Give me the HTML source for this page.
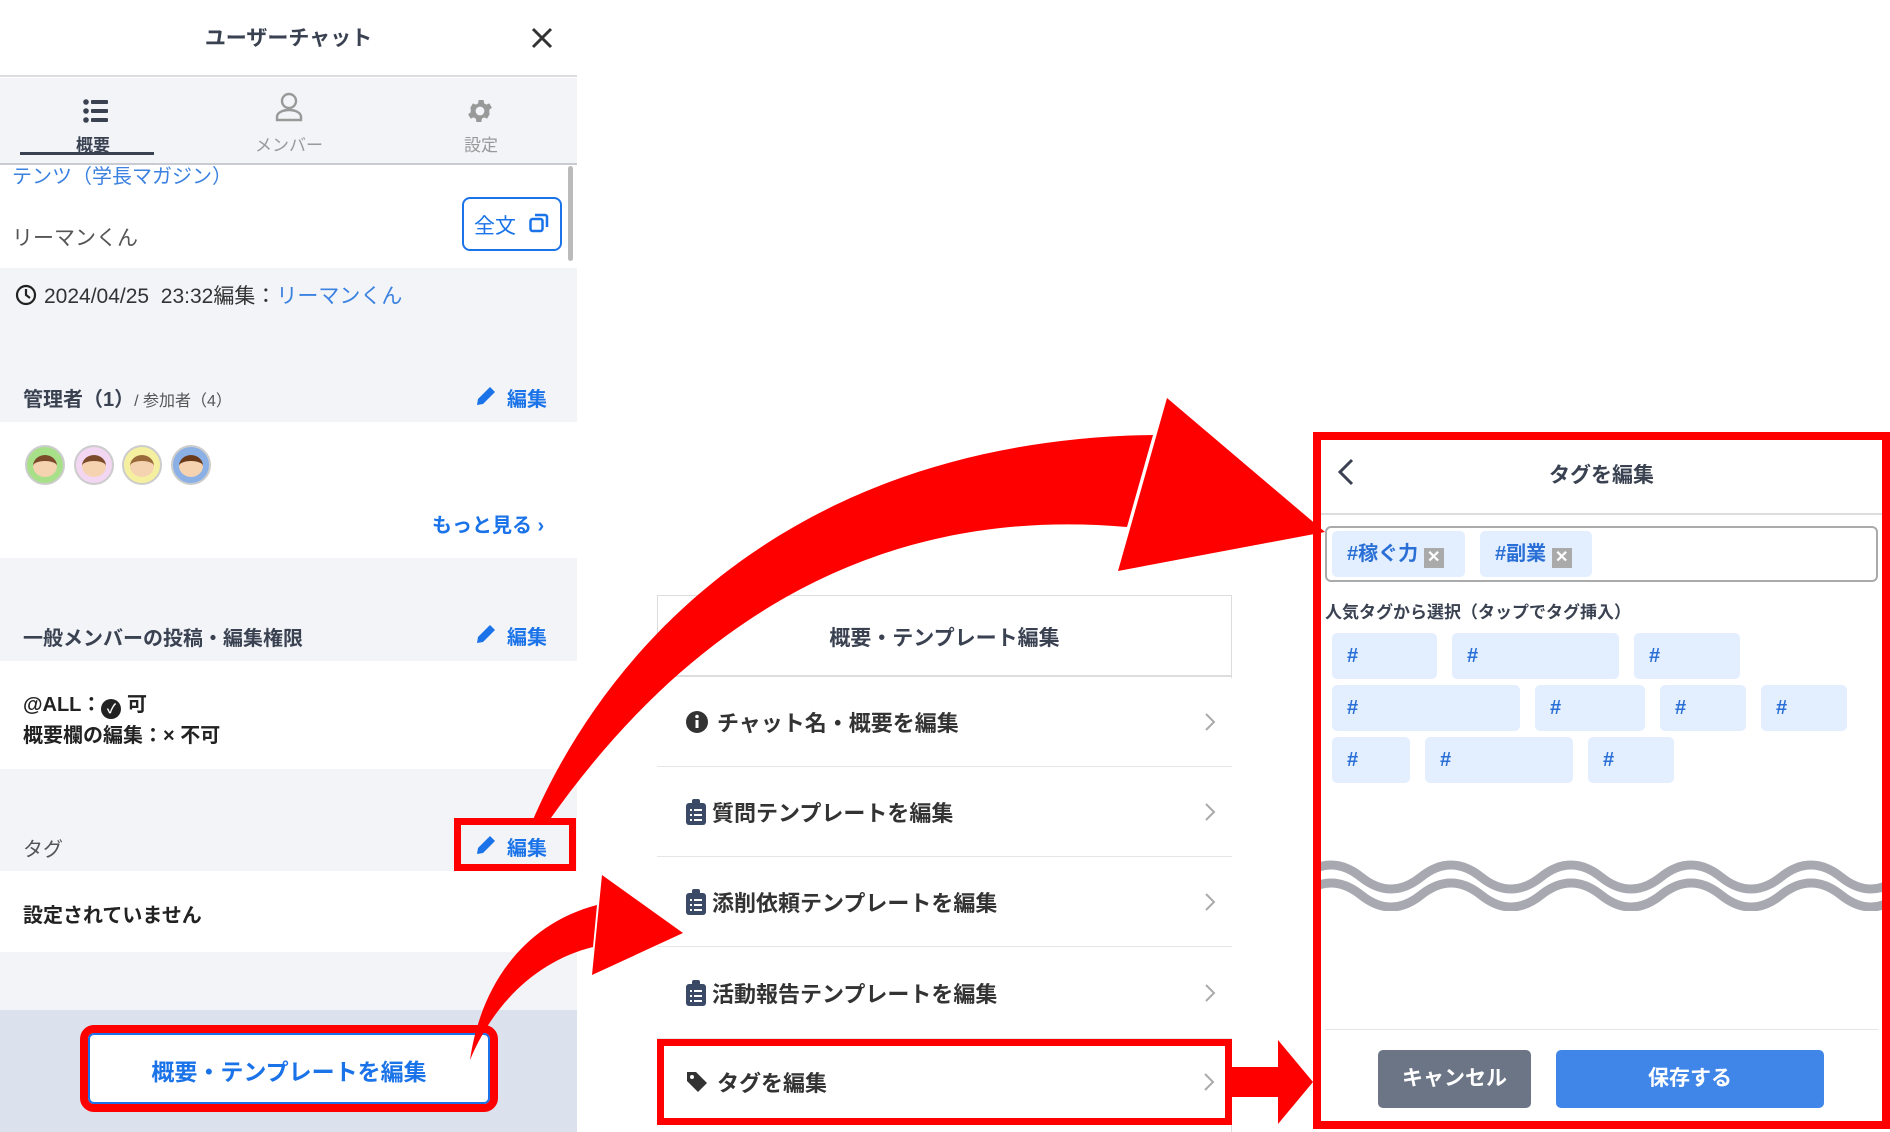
<!DOCTYPE html>
<html><head><meta charset="utf-8"><style>
*{margin:0;padding:0;box-sizing:border-box}
body{width:1890px;height:1132px;position:relative;overflow:hidden;background:#fff;font-family:"Liberation Sans","Noto Sans CJK JP",sans-serif;color:#333}
.a{position:absolute;white-space:nowrap}
.g{background:#f2f4f8}
.blue{color:#1a73e8}
.dk{color:#3a4252}
.row{position:absolute;left:657px;width:575px;border-bottom:1px solid #e6e6e6;background:#fff}
.row .t{position:absolute;left:60px;top:50%;transform:translateY(-50%);font-size:22px;font-weight:bold;color:#333}
.row .ic{position:absolute;left:29px;top:50%;transform:translateY(-50%)}
.row .ch{position:absolute;right:16px;top:50%;transform:translateY(-50%)}
.chip{position:absolute;background:#e3efff;border-radius:5px;height:46px;color:#2a6fd6;font-weight:bold;font-size:20px;line-height:46px;padding-left:15px}
</style></head><body>

<!-- LEFT PANEL -->
<div class="a" style="left:0;top:0;width:577px;height:77px;border-bottom:2px solid #ddd;background:#fff"></div>
<div class="a dk" style="left:0;width:577px;top:22px;text-align:center;font-size:21px;font-weight:bold">ユーザーチャット</div>
<svg class="a" style="left:531px;top:27px" width="22" height="22"><path d="M2 2L20 20M20 2L2 20" stroke="#333" stroke-width="3"/></svg>
<div class="a g" style="left:0;top:78px;width:577px;height:87px;border-bottom:2px solid #c8ccd2"></div>
<svg class="a" style="left:83px;top:99px" width="26" height="24"><g fill="#3a4252"><circle cx="3" cy="3" r="2.8"/><circle cx="3" cy="12" r="2.8"/><circle cx="3" cy="21" r="2.8"/><rect x="8" y="1" width="17" height="4" rx="1"/><rect x="8" y="10" width="17" height="4" rx="1"/><rect x="8" y="19" width="17" height="4" rx="1"/></g></svg>
<div class="a dk" style="left:76px;top:131px;font-size:17px;font-weight:bold">概要</div>
<div class="a" style="left:20px;top:152px;width:134px;height:3px;background:#3a4252"></div>
<svg class="a" style="left:274px;top:92px" width="30" height="30"><circle cx="15" cy="9" r="7" fill="none" stroke="#999" stroke-width="2.4"/><path d="M3 28v-3c0-4 5-7 12-7s12 3 12 7v3z" fill="none" stroke="#999" stroke-width="2.4"/></svg>
<div class="a" style="left:255px;top:131px;font-size:17px;color:#999">メンバー</div>
<svg class="a" style="left:465px;top:96px" width="30" height="30" viewBox="0 0 24 24"><path fill="#999" d="M19.4 13a7.5 7.5 0 000-2l2.1-1.6-2-3.5-2.5 1a7 7 0 00-1.7-1l-.4-2.7h-4l-.4 2.7a7 7 0 00-1.7 1l-2.5-1-2 3.5L4.6 11a7.5 7.5 0 000 2l-2.1 1.6 2 3.5 2.5-1a7 7 0 001.7 1l.4 2.7h4l.4-2.7a7 7 0 001.7-1l2.5 1 2-3.5zM12 15.5a3.5 3.5 0 110-7 3.5 3.5 0 010 7z"/></svg>
<div class="a" style="left:464px;top:131px;font-size:17px;color:#999">設定</div>

<div class="a" style="left:568px;top:166px;width:5px;height:95px;background:#bbb;border-radius:3px"></div>
<div class="a blue" style="left:12px;top:160px;font-size:20px;color:#3b82e0">テンツ（学長マガジン）</div>
<div class="a" style="left:12px;top:222px;font-size:21px;color:#555">リーマンくん</div>
<div class="a" style="left:462px;top:197px;width:100px;height:54px;border:2px solid #1a73e8;border-radius:8px;background:#fff"></div>
<div class="a blue" style="left:474px;top:210px;font-size:21px">全文</div>
<svg class="a" style="left:529px;top:213px" width="20" height="20"><rect x="1.5" y="6" width="12" height="12" rx="2" fill="none" stroke="#1a73e8" stroke-width="2.5"/><path d="M6 2h10a2 2 0 012 2v10" fill="none" stroke="#1a73e8" stroke-width="2.5"/></svg>

<div class="a g" style="left:0;top:268px;width:577px;height:154px"></div>
<svg class="a" style="left:15px;top:284px" width="22" height="22"><circle cx="11" cy="11" r="9" fill="none" stroke="#222" stroke-width="2.2"/><path d="M11 5v6l4 3" fill="none" stroke="#222" stroke-width="2.2"/></svg>
<div class="a" style="left:44px;top:280px;font-size:21px;color:#333">2024/04/25&nbsp; 23:32編集：<span style="color:#3b82e0">リーマンくん</span></div>
<div class="a dk" style="left:23px;top:383px;font-size:20px;font-weight:bold">管理者（1）<span style="font-size:16px;font-weight:normal;color:#555">/ 参加者（4）</span></div>
<svg class="a" style="left:475px;top:385px" width="22" height="22"><path d="M2 20l1-6L15 2l5 5L8 19z" fill="#1a73e8"/></svg>
<div class="a blue" style="left:507px;top:383px;font-size:20px;font-weight:bold">編集</div>

<div class="a" style="left:25px;top:445px;width:40px;height:40px;border-radius:50%;background:#a8e08a;border:2px solid #ccc"></div>
<div class="a" style="left:74px;top:445px;width:40px;height:40px;border-radius:50%;background:#f2d6f2;border:2px solid #ccc"></div>
<div class="a" style="left:122px;top:445px;width:40px;height:40px;border-radius:50%;background:#f5f0a0;border:2px solid #ccc"></div>
<div class="a" style="left:171px;top:445px;width:40px;height:40px;border-radius:50%;background:#8ab0e6;border:2px solid #ccc"></div>
<div class="a" style="left:33px;top:455px;width:24px;height:22px;border-radius:50%;background:#f5d3b0;border-top:6px solid #7a4a2a"></div>
<div class="a" style="left:82px;top:455px;width:24px;height:22px;border-radius:50%;background:#f5d3b0;border-top:6px solid #7a4a2a"></div>
<div class="a" style="left:130px;top:455px;width:24px;height:22px;border-radius:50%;background:#f5d3b0;border-top:6px solid #9a6a3a"></div>
<div class="a" style="left:179px;top:455px;width:24px;height:22px;border-radius:50%;background:#f5d3b0;border-top:6px solid #6a3a1a"></div>
<div class="a blue" style="left:432px;top:509px;font-size:20px;font-weight:bold">もっと見る ›</div>

<div class="a g" style="left:0;top:558px;width:577px;height:103px"></div>
<div class="a dk" style="left:23px;top:622px;font-size:20px;font-weight:bold">一般メンバーの投稿・編集権限</div>
<svg class="a" style="left:475px;top:623px" width="22" height="22"><path d="M2 20l1-6L15 2l5 5L8 19z" fill="#1a73e8"/></svg>
<div class="a blue" style="left:507px;top:621px;font-size:20px;font-weight:bold">編集</div>
<div class="a" style="left:23px;top:688px;font-size:20px;font-weight:bold;color:#222">@ALL：<span style="display:inline-block;width:20px;height:20px;border-radius:50%;background:#222;color:#fff;font-size:13px;text-align:center;line-height:20px;vertical-align:-2px">✓</span> 可</div>
<div class="a" style="left:23px;top:719px;font-size:20px;font-weight:bold;color:#222">概要欄の編集：× 不可</div>

<div class="a g" style="left:0;top:769px;width:577px;height:102px"></div>
<div class="a" style="left:23px;top:833px;font-size:20px;color:#555">タグ</div>
<div class="a" style="left:454px;top:818px;width:122px;height:53px;border:7px solid #f00"></div>
<svg class="a" style="left:475px;top:834px" width="22" height="22"><path d="M2 20l1-6L15 2l5 5L8 19z" fill="#1a73e8"/></svg>
<div class="a blue" style="left:507px;top:832px;font-size:20px;font-weight:bold">編集</div>
<div class="a" style="left:23px;top:899px;font-size:20px;font-weight:bold;color:#222">設定されていません</div>

<div class="a g" style="left:0;top:952px;width:577px;height:58px"></div>
<div class="a" style="left:0;top:1010px;width:577px;height:122px;background:#dbe2ee"></div>
<div class="a" style="left:80px;top:1025px;width:418px;height:87px;border:8px solid #f00;border-radius:14px"></div>
<div class="a" style="left:88px;top:1033px;width:402px;height:71px;background:#fff;border:2px solid #1a73e8;border-radius:6px"></div>
<div class="a blue" style="left:88px;width:402px;top:1053px;text-align:center;font-size:23px;font-weight:bold">概要・テンプレートを編集</div>

<!-- MIDDLE PANEL -->
<div class="a" style="left:657px;top:595px;width:575px;height:82px;border:1px solid #ddd;border-bottom:2px solid #ddd;background:#fff"></div>
<div class="a dk" style="left:657px;width:575px;top:622px;text-align:center;font-size:21px;font-weight:bold">概要・テンプレート編集</div>
<div class="a" style="left:1231px;top:677px;width:1px;height:455px;background:#ddd"></div>
<div class="row" style="top:678px;height:89px"><svg class="ic" width="22" height="22"><circle cx="11" cy="11" r="11" fill="#333"/><rect x="9.5" y="9" width="3" height="8" fill="#fff"/><circle cx="11" cy="5.5" r="1.8" fill="#fff"/></svg><div class="t">チャット名・概要を編集</div><svg class="ch" width="12" height="20"><path d="M2 2l8 8-8 8" fill="none" stroke="#aaa" stroke-width="2"/></svg></div>
<div class="row" style="top:767px;height:90px"><svg class="ic" width="20" height="26"><rect x="0" y="4" width="20" height="22" rx="3" fill="#3a4a66"/><rect x="6" y="0" width="8" height="6" rx="2" fill="#3a4a66"/><g fill="#fff"><rect x="4" y="10" width="2" height="2"/><rect x="8" y="10" width="8" height="2"/><rect x="4" y="15" width="2" height="2"/><rect x="8" y="15" width="8" height="2"/><rect x="4" y="20" width="2" height="2"/><rect x="8" y="20" width="8" height="2"/></g></svg><div class="t" style="left:55px">質問テンプレートを編集</div><svg class="ch" width="12" height="20"><path d="M2 2l8 8-8 8" fill="none" stroke="#aaa" stroke-width="2"/></svg></div>
<div class="row" style="top:857px;height:90px"><svg class="ic" width="20" height="26"><rect x="0" y="4" width="20" height="22" rx="3" fill="#3a4a66"/><rect x="6" y="0" width="8" height="6" rx="2" fill="#3a4a66"/><g fill="#fff"><rect x="4" y="10" width="2" height="2"/><rect x="8" y="10" width="8" height="2"/><rect x="4" y="15" width="2" height="2"/><rect x="8" y="15" width="8" height="2"/><rect x="4" y="20" width="2" height="2"/><rect x="8" y="20" width="8" height="2"/></g></svg><div class="t" style="left:55px">添削依頼テンプレートを編集</div><svg class="ch" width="12" height="20"><path d="M2 2l8 8-8 8" fill="none" stroke="#aaa" stroke-width="2"/></svg></div>
<div class="row" style="top:947px;height:92px"><svg class="ic" width="20" height="26"><rect x="0" y="4" width="20" height="22" rx="3" fill="#3a4a66"/><rect x="6" y="0" width="8" height="6" rx="2" fill="#3a4a66"/><g fill="#fff"><rect x="4" y="10" width="2" height="2"/><rect x="8" y="10" width="8" height="2"/><rect x="4" y="15" width="2" height="2"/><rect x="8" y="15" width="8" height="2"/><rect x="4" y="20" width="2" height="2"/><rect x="8" y="20" width="8" height="2"/></g></svg><div class="t" style="left:55px">活動報告テンプレートを編集</div><svg class="ch" width="12" height="20"><path d="M2 2l8 8-8 8" fill="none" stroke="#aaa" stroke-width="2"/></svg></div>
<div class="row" style="top:1039px;height:86px;border:7px solid #f00"><svg class="ic" style="left:22px" width="22" height="22"><path d="M1 1h9l11 11-9 9L1 10z" fill="#333"/><circle cx="6" cy="6" r="2" fill="#fff"/></svg><div class="t" style="left:53px">タグを編集</div><svg class="ch" style="right:10px" width="12" height="20"><path d="M2 2l8 8-8 8" fill="none" stroke="#aaa" stroke-width="2"/></svg></div>

<!-- RIGHT PANEL -->
<div class="a" style="left:1313px;top:432px;width:577px;height:697px;border:8px solid #f00;background:#fff"></div>
<svg class="a" style="left:1337px;top:458px" width="18" height="28"><path d="M15 2L3 14l12 12" fill="none" stroke="#3a4252" stroke-width="3"/></svg>
<div class="a dk" style="left:1321px;width:561px;top:459px;text-align:center;font-size:21px;font-weight:bold">タグを編集</div>
<div class="a" style="left:1321px;top:513px;width:561px;height:2px;background:#ddd"></div>
<div class="a" style="left:1325px;top:526px;width:553px;height:56px;border:2px solid #aaa;border-radius:6px"></div>
<div class="chip" style="left:1332px;top:531px;width:133px">#稼ぐ力 <span style="display:inline-block;width:20px;height:20px;background:#aaa;color:#fff;font-size:16px;line-height:20px;text-align:center;vertical-align:-2px">✕</span></div>
<div class="chip" style="left:1480px;top:531px;width:112px">#副業 <span style="display:inline-block;width:20px;height:20px;background:#aaa;color:#fff;font-size:16px;line-height:20px;text-align:center;vertical-align:-2px">✕</span></div>
<div class="a dk" style="left:1325px;top:598px;font-size:17px;font-weight:bold">人気タグから選択（タップでタグ挿入）</div>
<div class="chip" style="left:1332px;top:633px;width:105px">#</div>
<div class="chip" style="left:1452px;top:633px;width:167px">#</div>
<div class="chip" style="left:1634px;top:633px;width:106px">#</div>
<div class="chip" style="left:1332px;top:685px;width:188px">#</div>
<div class="chip" style="left:1535px;top:685px;width:110px">#</div>
<div class="chip" style="left:1660px;top:685px;width:86px">#</div>
<div class="chip" style="left:1761px;top:685px;width:86px">#</div>
<div class="chip" style="left:1332px;top:737px;width:78px">#</div>
<div class="chip" style="left:1425px;top:737px;width:148px">#</div>
<div class="chip" style="left:1588px;top:737px;width:86px">#</div>
<svg class="a" style="left:1321px;top:855px" width="561" height="56"><g fill="none" stroke="#a8a9b0" stroke-width="9"><path d="M-20 22 q30 -24 60 0 t60 0 t60 0 t60 0 t60 0 t60 0 t60 0 t60 0 t60 0 t60 0 t60 0"/><path d="M-20 40 q30 -24 60 0 t60 0 t60 0 t60 0 t60 0 t60 0 t60 0 t60 0 t60 0 t60 0 t60 0"/></g></svg>
<div class="a" style="left:1325px;top:1029px;width:553px;height:1px;background:#e5e5e5"></div>
<div class="a" style="left:1378px;top:1050px;width:153px;height:58px;background:#6c7585;border-radius:5px;color:#fff;font-size:21px;font-weight:bold;text-align:center;line-height:58px">キャンセル</div>
<div class="a" style="left:1556px;top:1050px;width:268px;height:58px;background:#3f86e8;border-radius:5px;color:#fff;font-size:21px;font-weight:bold;text-align:center;line-height:58px">保存する</div>

<!-- ARROWS -->
<svg class="a" style="left:0;top:0" width="1890" height="1132">
<g fill="#f00">
<path d="M532 822 C610 640 800 440 1153 435 L1127 527 C880 505 690 620 548 822 Z"/>
<path d="M1167 398 L1325 532 L1118 571 Z"/>
<path d="M470 1060 C480 990 520 925 597 905 L593 947 C540 960 495 1000 470 1060 Z"/>
<path d="M602 875 L683 933 L592 975 Z"/>
<rect x="1232" y="1067" width="48" height="30"/>
<path d="M1278 1040 L1313 1082 L1278 1124 Z"/>
</g>
</svg>
</body></html>
